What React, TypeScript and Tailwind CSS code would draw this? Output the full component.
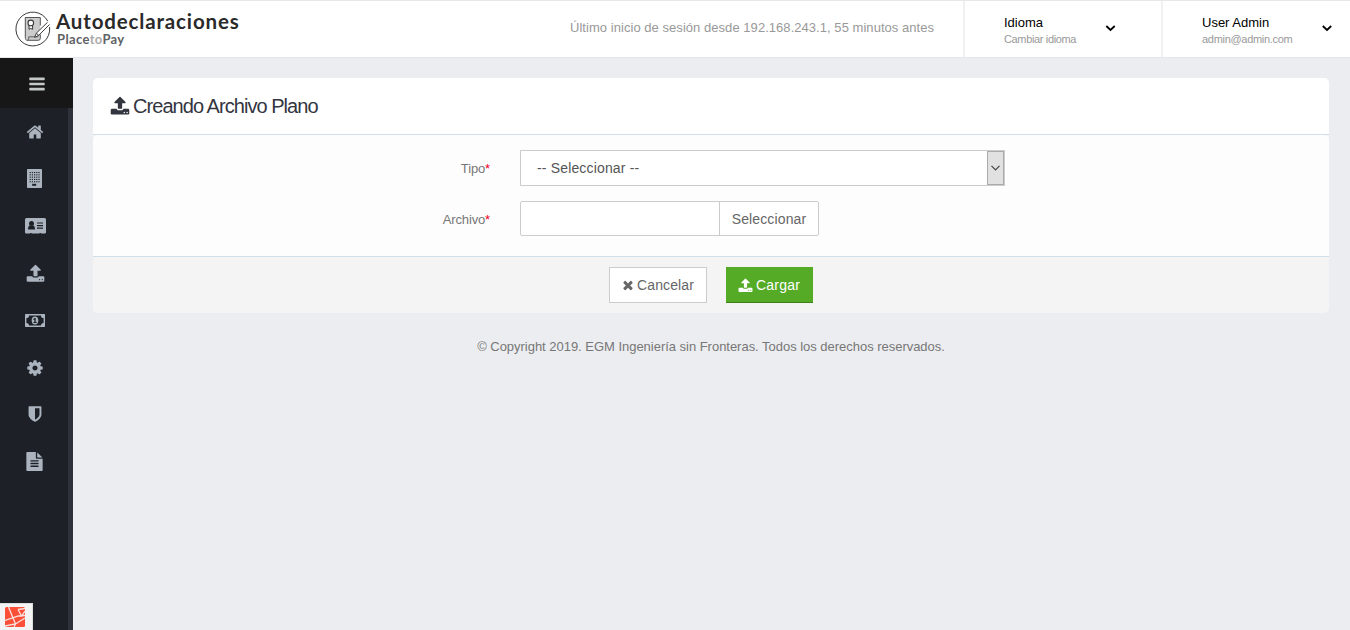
import React from "react";

const PATHS = {
  bars: "M1664 1344v128q0 26-19 45t-45 19H192q-26 0-45-19t-19-45v-128q0-26 19-45t45-19h1408q26 0 45 19t19 45zm0-512v128q0 26-19 45t-45 19H192q-26 0-45-19t-19-45V832q0-26 19-45t45-19h1408q26 0 45 19t19 45zm0-512v128q0 26-19 45t-45 19H192q-26 0-45-19t-19-45V320q0-26 19-45t45-19h1408q26 0 45 19t19 45z",
  home: "M1472 992v480q0 26-19 45t-45 19h-384v-384h-256v384h-384q-26 0-45-19t-19-45v-480q0-1 .5-3t.5-3l575-474 575 474q1 2 1 6zm223-69l-62 74q-8 9-21 11h-3q-13 0-21-7l-692-577-692 577q-12 8-24 7-13-2-21-11l-62-74q-8-10-7-23.5t11-21.5l719-599q32-26 76-26t76 26l244 204v-195q0-14 9-23t23-9h192q14 0 23 9t9 23v408l219 182q10 8 11 21.5t-7 23.5z",
  cog: "M1152 896q0-106-75-181t-181-75-181 75-75 181 75 181 181 75 181-75 75-181zm512-109v222q0 12-8 23t-20 13l-185 28q-19 54-39 91 35 50 107 138 10 12 10 25t-9 23q-27 37-99 108t-94 71q-12 0-26-9l-138-108q-44 23-91 38-16 136-29 186-7 28-36 28h-222q-14 0-24.5-8.5t-11.5-21.5l-28-184q-49-16-90-37l-141 107q-10 9-25 9-14 0-25-11-126-114-165-168-7-10-7-23 0-12 8-23 15-21 51-66.5t54-70.5q-27-50-41-99l-183-27q-13-2-21-12.5t-8-23.5v-222q0-12 8-23t19-13l186-28q14-46 39-92-40-57-107-138-10-12-10-24 0-10 9-23 26-36 98.5-107.5t94.5-71.5q13 0 26 10l138 107q44-23 91-38 16-136 29-186 7-28 36-28h222q14 0 24.5 8.5t11.5 21.5l28 184q49 16 90 37l142-107q9-9 24-9 13 0 25 10 129 119 165 170 7 8 7 22 0 12-8 23-15 21-51 66.5t-54 70.5q26 50 41 98l183 28q13 2 21 12.5t8 23.5z",
  upload: "M1344 1472q0-26-19-45t-45-19-45 19-19 45 19 45 45 19 45-19 19-45zm256 0q0-26-19-45t-45-19-45 19-19 45 19 45 45 19 45-19 19-45zm128-224v320q0 40-28 68t-68 28H160q-40 0-68-28t-28-68v-320q0-40 28-68t68-28h427q21 56 70.5 92t110.5 36h256q61 0 110.5-36t70.5-92h427q40 0 68 28t28 68zm-325-648q-17 40-59 40h-256v448q0 26-19 45t-45 19H768q-26 0-45-19t-19-45V640H448q-42 0-59-40-17-39 14-69l448-448q18-19 45-19t45 19l448 448q31 30 14 69z",
  times: "M1490 1322q0 40-28 68l-136 136q-28 28-68 28t-68-28l-294-294-294 294q-28 28-68 28t-68-28l-136-136q-28-28-28-68t28-68l294-294-294-294q-28-28-28-68t28-68l136-136q28-28 68-28t68 28l294 294 294-294q28-28 68-28t68 28l136 136q28 28 28 68t-28 68l-294 294 294 294q28 28 28 68z",
  shield: "M1344 960V320H896v1137q119-63 213-137 235-184 235-360zm192-768v768q0 86-33.5 170.5t-83 150-118 127.5-126.5 103-121 77.5-89.5 49.5-42.5 20q-12 6-26 6t-26-6q-16-7-42.5-20t-89.5-49.5-121-77.5-126.5-103-118-127.5-83-150T256 960V192q0-26 19-45t45-19h1152q26 0 45 19t19 45z",
  file: "M1596 476q14 14 28 36h-472V40q22 14 36 28zm-476 164h544v1056q0 40-28 68t-68 28H224q-40 0-68-28t-28-68V96q0-40 28-68t68-28h800v544q0 40 28 68t68 28zm160 736v-64q0-14-9-23t-23-9H544q-14 0-23 9t-9 23v64q0 14 9 23t23 9h704q14 0 23-9t9-23zm0-256v-64q0-14-9-23t-23-9H544q-14 0-23 9t-9 23v64q0 14 9 23t23 9h704q14 0 23-9t9-23zm0-256v-64q0-14-9-23t-23-9H544q-14 0-23 9t-9 23v64q0 14 9 23t23 9h704q14 0 23-9t9-23z",
};

function Icon({ name, className }: { name: keyof typeof PATHS; className: string }) {
  return (
    <svg viewBox="0 0 1792 1792" fill="currentColor" className={className}>
      <path d={PATHS[name]} />
    </svg>
  );
}

function BuildingIcon() {
  const windows = [];
  for (let r = 0; r < 5; r++)
    for (let c = 0; c < 5; c++)
      windows.push(<rect key={`${r}-${c}`} x={2.6 + c * 2.2} y={3 + r * 2.3} width="1.2" height="1.1" fill="#1d2127" />);
  return (
    <svg viewBox="0 0 15 19" className="mr-[2px] h-[19px] w-[15px]">
      <rect width="15" height="19" rx="0.8" fill="currentColor" />
      {windows}
      <rect x="5.2" y="14.8" width="4" height="2" fill="#1d2127" />
    </svg>
  );
}

function CardIcon() {
  return (
    <svg viewBox="0 0 21 16" className="h-4 w-[21px]">
      <path d="M1.5 0h18A1.5 1.5 0 0 1 21 1.500v12.800a1.200 1.200 0 0 1-1.200 1.200H16V15h-1.500v.5h-8V15H5v.5H1.200A1.200 1.200 0 0 1 0 14.300V1.500A1.500 1.500 0 0 1 1.500 0Z" fill="currentColor" />
      <g fill="#1d2127">
        <circle cx="6.500" cy="5.500" r="2.500" />
        <path d="M3 11.500c0-2.600.8-4 2-4 .9.800 2.100.8 3 0 1.200 0 2 1.400 2 4Z" />
        <path d="M12 4.500h6v1h-6zM12 7h6v1.300h-6zM12 9.600h6v1.200h-6z" />
      </g>
    </svg>
  );
}

function MoneyIcon() {
  return (
    <svg viewBox="0 0 20 13" className="mt-px h-[13px] w-5">
      <path fillRule="evenodd" fill="currentColor" d="M.7 0h18.600a.7.7 0 0 1 .7.7v11.600a.7.7 0 0 1-.7.7H.7a.7.7 0 0 1-.7-.7V.7A.7.7 0 0 1 .7 0ZM4 1.400A2.600 2.600 0 0 1 1.400 4v5A2.600 2.600 0 0 1 4 11.600h12A2.600 2.600 0 0 1 18.600 9V4A2.600 2.600 0 0 1 16 1.400Z" />
      <ellipse cx="10" cy="6.500" rx="3.300" ry="4.100" fill="currentColor" />
      <path d="M9.500 4h1.200v4h.9v1H8.500V8h.9V5.500l-.7.5-.6-.8Z" fill="#1d2127" />
    </svg>
  );
}

function LogoMark() {
  return (
    <svg viewBox="0 0 36 36" fill="none" className="mt-px h-9 w-9">
      <path d="M32.800 10.200A16.900 16.900 0 1 0 34.600 16" stroke="#3a3a3a" strokeWidth="1" />
      <path d="M10.300 6.500h15v20.800a2 2 0 0 1-2 2h-10a3 3 0 0 1-3-3Z" fill="#ccc" />
      <path d="M25.300 14.500v-8h-15v18.500M25.300 23.500v3.800a2 2 0 0 1-2 2H12.300" stroke="#444" strokeWidth=".9" />
      <path d="M10.300 24.500v2.600c0 2.900 3.400 2.900 3.400.2v-1.500h9.500" stroke="#444" strokeWidth=".8" />
      <path d="M14 14.500v3.800l1.800-.9 1.800.9v-3.800" fill="#fff" stroke="#3a3a3a" strokeWidth="1" />
      <circle cx="15.800" cy="11.900" r="2.800" fill="#fff" stroke="#3a3a3a" strokeWidth="1.100" />
      <path d="m19.600 26.400 1.700-4.200L32.300 11.500c1.700-.7 2.700.6 2 2.200L23.800 24.300Z" fill="#fff" />
      <path d="m32.500 11.300-11.200 10.900-1.700 4.200 4.200-2.100 10.700-10.800M21.300 22.200l2.500 2.100" stroke="#3a3a3a" strokeWidth="1" />
    </svg>
  );
}

function Chevron({ className }: { className: string }) {
  return (
    <svg viewBox="0 0 10 7" fill="none" className={className}>
      <path d="m.8 1 4.200 4 4.200-4" stroke="currentColor" strokeWidth="1.800" />
    </svg>
  );
}

function Header() {
  return (
    <header className="flex h-[58px] w-full border-y border-[#e6e7ea] bg-white">
      <div className="flex w-[540px] pl-[15px] pt-[9px]">
        <LogoMark />
        <div className="pl-[5px] font-['Lato',sans-serif] font-bold">
          <div className="h-[22px] whitespace-nowrap text-[20.500px] leading-[22px] tracking-[0.850px] text-[#2a2a2a]">Autodeclaraciones</div>
          <div className="whitespace-nowrap pl-px text-[13px] leading-[14px] tracking-[0.350px] text-[#606266]">
            Place<span className="text-[#aaa]">to</span>Pay
          </div>
        </div>
      </div>
      <div className="w-[423px] whitespace-nowrap pl-[30px] pt-[17px] text-[13px] leading-5 tracking-[0.045px] text-[#999]">
        Último inicio de sesión desde 192.168.243.1, 55 minutos antes
      </div>
      <div className="flex w-[198px] border-l-2 border-[#f1f1f1] pl-[39px]">
        <div className="w-[101px] whitespace-nowrap pt-[13px]">
          <div className="text-[13px] leading-[17px] text-black">Idioma</div>
          <div className="text-[11px] leading-4 tracking-[-0.350px] text-[#999]">Cambiar idioma</div>
        </div>
        <Chevron className="mt-[24px] h-[7px] w-[11px] text-black" />
      </div>
      <div className="flex w-[189px] border-l-2 border-[#f1f1f1] pl-[39px]">
        <div className="w-[120px] whitespace-nowrap pt-[13px]">
          <div className="text-[13px] leading-[17px] text-black">User Admin</div>
          <div className="text-[11px] leading-4 tracking-[-0.300px] text-[#999]">admin@admin.com</div>
        </div>
        <Chevron className="mt-[24px] h-[7px] w-[10px] text-black" />
      </div>
    </header>
  );
}

function Sidebar() {
  const items = [
    <Icon name="home" className="h-[18px] w-[18px]" />,
    <BuildingIcon />,
    <CardIcon />,
    <Icon name="upload" className="mt-px h-[19px] w-[19px]" />,
    <MoneyIcon />,
    <Icon name="cog" className="mt-px h-[18px] w-[18px]" />,
    <Icon name="shield" className="h-[18px] w-[18px]" />,
    <Icon name="file" className="mr-px h-[19px] w-[19px]" />,
  ];
  return (
    <aside className="flex h-[572px] w-[73px] flex-col bg-[#1d2127]">
      <div className="flex h-[50px] justify-center bg-[#171717] pt-[17px] text-[#c5c8c8]">
        <Icon name="bars" className="h-[18px] w-[18px]" />
      </div>
      <div className="flex flex-1 flex-col border-r-[5px] border-[#2e3139] text-[#abb4be]">
        {items.map((item, i) => (
          <div key={i} className="flex h-[47.100px] items-center justify-center pl-[2px]">{item}</div>
        ))}
        <div className="mt-auto flex h-[27px] w-[33px] border-r border-t border-[#ddd] bg-[#f4f4f4] pl-[5px] pt-[3px]">
          <svg viewBox="0 0 20 20" className="h-5 w-5">
            <rect width="20" height="20" rx="1.500" fill="#fb4f37" />
            <path d="M0 13.500 13.500 9 20 8.500M3.500 0l7 17M13 2.500 16.500 9 20 4M13 2.500 20 1.500M0 19l10.500-2L20 11M10.500 17 9 20" stroke="#fbe3df" strokeWidth="1.300" fill="none" />
          </svg>
        </div>
      </div>
    </aside>
  );
}

function FieldLabel({ text }: { text: string }) {
  return (
    <label className="w-[397px] pt-px text-right text-[13px] leading-[35px] tracking-[-0.150px] text-[#777]">
      {text}<span className="text-[#f00020]">*</span>
    </label>
  );
}

export default function App() {
  return (
    <div className="flex h-[630px] w-[1350px] flex-col overflow-hidden bg-[#ecedf0] font-['Liberation_Sans',sans-serif]">
      <Header />
      <div className="flex">
        <Sidebar />
        <main className="w-[1277px] pl-5 pt-5">
          <section className="w-[1236px] overflow-hidden rounded-[5px] bg-[#f4f4f4]">
            <div className="flex h-[57px] items-center border-b border-[#d0dfea] bg-white pl-[17px] text-[#33353f]">
              <Icon name="upload" className="h-5 w-5" />
              <h2 className="pl-[3px] text-[20px] leading-6 tracking-[-0.950px]">Creando Archivo Plano</h2>
            </div>
            <div className="h-[121px] rounded-t-[5px] bg-[#fdfdfd] pt-[15px]">
              <div className="flex h-[36px]">
                <FieldLabel text="Tipo" />
                <div className="ml-[30px] flex h-9 w-[485px] border border-[#ccc] bg-white">
                  <span className="flex-1 pl-4 text-[14px] leading-[34px] tracking-[0.160px] text-[#555]">-- Seleccionar --</span>
                  <span className="flex w-[17px] items-center justify-center border border-[#aaa] bg-[#e1e1e1]">
                    <svg viewBox="0 0 9 6" fill="none" className="h-[6px] w-[9px]">
                      <path d="m.5.800 4 4 4-4" stroke="#444" strokeWidth="1.200" />
                    </svg>
                  </span>
                </div>
              </div>
              <div className="mt-[15px] flex h-[35px]">
                <FieldLabel text="Archivo" />
                <div className="ml-[30px] flex h-[35px] w-[299px] rounded-[2px] border border-[#ccc] bg-white">
                  <span className="w-[199px] border-r border-[#ccc]" />
                  <span className="flex-1 text-center text-[14px] leading-[34px] tracking-[0.120px] text-[#666]">Seleccionar</span>
                </div>
              </div>
            </div>
            <div className="flex h-[57px] border-t border-[#d0dfea] bg-[#f4f4f4] pl-[516px] pt-[10px] text-[14px] leading-[34px]">
              <button className="flex h-9 w-[98px] items-center border border-[#ccc] bg-white pl-[11px] text-[#666]">
                <Icon name="times" className="h-[14px] w-[14px]" />
                <span className="pl-[2px] tracking-[0.120px]">Cancelar</span>
              </button>
              <button className="ml-[19px] flex h-9 w-[87px] items-center border-b border-[#3c8119] bg-[#55ab26] pl-3 text-white">
                <Icon name="upload" className="mt-px h-[15px] w-[15px]" />
                <span className="pl-[3px] tracking-[0.200px]">Cargar</span>
              </button>
            </div>
          </section>
          <footer className="w-[1236px] pt-[24px] text-center text-[13px] leading-5 tracking-[-0.025px] text-[#777]">
            © Copyright 2019. EGM Ingeniería sin Fronteras. Todos los derechos reservados.
          </footer>
        </main>
      </div>
    </div>
  );
}
